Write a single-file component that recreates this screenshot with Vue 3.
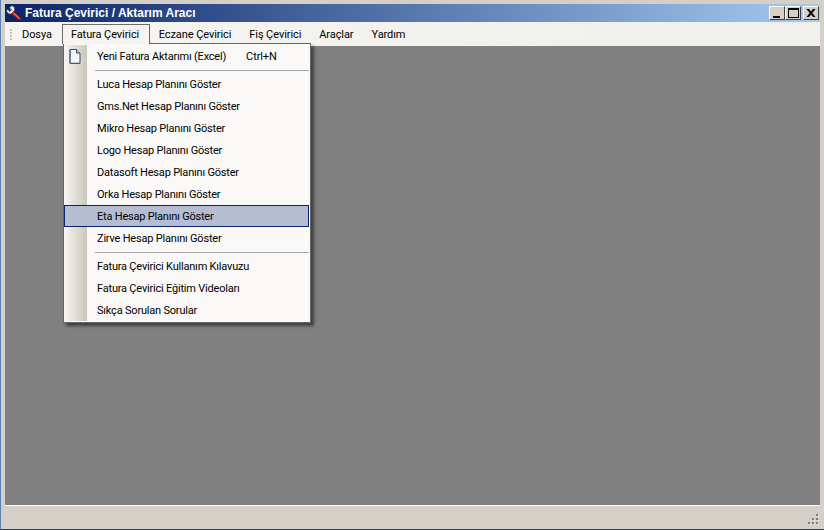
<script setup>
const topMenus = ['Dosya', 'Fatura Çevirici', 'Eczane Çevirici', 'Fiş Çevirici', 'Araçlar', 'Yardım']

const groups = [
  [{ label: 'Yeni Fatura Aktarımı (Excel)', shortcut: 'Ctrl+N', icon: true }],
  [
    { label: 'Luca Hesap Planını Göster' },
    { label: 'Gms.Net Hesap Planını Göster' },
    { label: 'Mikro Hesap Planını Göster' },
    { label: 'Logo Hesap Planını Göster' },
    { label: 'Datasoft Hesap Planını Göster' },
    { label: 'Orka Hesap Planını Göster' },
    { label: 'Eta Hesap Planını Göster', active: true },
    { label: 'Zirve Hesap Planını Göster' }
  ],
  [
    { label: 'Fatura Çevirici Kullanım Kılavuzu' },
    { label: 'Fatura Çevirici Eğitim Videoları' },
    { label: 'Sıkça Sorulan Sorular' }
  ]
]
</script>

<template>
  <div class="window">
    <div class="titlebar">
      <svg class="app-icon" width="16" height="16" viewBox="0 0 16 16">
        <path d="M5.5 0.8 L3.5 2.8 L5.4 5 L3.8 6.4 L1.7 4.4 L0.6 5.6 C0.8 8 2.8 9.4 5 9 L7.5 7.2 C9 5.5 9 3.2 7.8 1.6 C7.2 1 6.3 0.8 5.5 0.8 Z" fill="#e4e4ea" stroke="#4a4a52" stroke-width="0.7" />
        <path d="M5.6 8.6 L7.8 6.6 L14.6 13 C15.3 14 14.2 15.4 13 14.8 Z" fill="#e0301e" stroke="#7a1410" stroke-width="0.6" />
        <path d="M7.6 8 L13.4 13.6" stroke="#ff9a80" stroke-width="0.8" />
      </svg>
      <span class="title">Fatura Çevirici / Aktarım Aracı</span>
      <div class="caption-buttons">
        <button class="cap-btn">
          <span class="glyph-min"></span>
        </button>
        <button class="cap-btn max">
          <span class="glyph-max"></span>
        </button>
        <button class="cap-btn close">
          <svg width="10" height="8" viewBox="0 0 10 8">
            <path d="M0.5 0 L3 0 L5 2.6 L7 0 L9.5 0 L6.3 4 L9.5 8 L7 8 L5 5.4 L3 8 L0.5 8 L3.7 4 Z" fill="#000" />
          </svg>
        </button>
      </div>
    </div>

    <div class="menubar">
      <div class="grip">
        <i></i><i></i><i></i><i></i>
      </div>
      <div
        v-for="(m, i) in topMenus"
        :key="m"
        class="top-item"
        :class="{ open: i === 1 }"
      >{{ m }}</div>
    </div>

    <div class="client">
      <div class="dropdown">
        <template v-for="(group, g) in groups" :key="g">
          <div v-if="g > 0" class="sep-row">
            <div class="gutter"></div>
            <div class="sep"></div>
          </div>
          <div
            v-for="item in group"
            :key="item.label"
            class="item"
            :class="{ active: item.active }"
          >
            <div class="gutter">
              <svg v-if="item.icon" class="doc" width="12" height="15" viewBox="0 0 12 15">
                <path d="M1 0.5 H7.5 L11 4 V14.5 H1 Z" fill="#f4f7fc" stroke="#2f4a78" />
                <path d="M7.5 0.5 V4 H11" fill="#c4d2e6" stroke="#2f4a78" />
                <path d="M1 14.2 H11 M1 1 V14" stroke="#4c6690" stroke-width="1" />
              </svg>
            </div>
            <span class="label">{{ item.label }}</span>
            <span v-if="item.shortcut" class="shortcut">{{ item.shortcut }}</span>
          </div>
        </template>
      </div>
    </div>

    <div class="statusbar">
      <svg class="resize" width="12" height="12" viewBox="0 0 12 12">
        <g fill="#808080">
          <rect x="8" y="0" width="2" height="2" />
          <rect x="4" y="4" width="2" height="2" />
          <rect x="8" y="4" width="2" height="2" />
          <rect x="0" y="8" width="2" height="2" />
          <rect x="4" y="8" width="2" height="2" />
          <rect x="8" y="8" width="2" height="2" />
        </g>
        <g fill="#fff">
          <rect x="10" y="2" width="1" height="1" />
          <rect x="6" y="6" width="1" height="1" />
          <rect x="10" y="6" width="1" height="1" />
          <rect x="2" y="10" width="1" height="1" />
          <rect x="6" y="10" width="1" height="1" />
          <rect x="10" y="10" width="1" height="1" />
        </g>
      </svg>
    </div>
  </div>
</template>

<style>
html, body {
  margin: 0;
  padding: 0;
  overflow: hidden;
}
</style>

<style scoped>
.window {
  width: 824px;
  height: 530px;
  box-sizing: border-box;
  padding: 4px 4px 1px 4px;
  background: #d4d0c8;
  display: flex;
  flex-direction: column;
  font-family: Roboto, "Liberation Sans", sans-serif;
  font-size: 11px;
  color: #000;
  border-bottom: 1px solid #404040;
  border-left: 1px solid #5a7fb8;
}

.titlebar {
  height: 18px;
  flex: none;
  display: flex;
  align-items: center;
  padding: 0 2px 0 1px;
  background: linear-gradient(to right, #0a246a, #a6caf0);
}

.app-icon {
  flex: none;
  margin-right: 3px;
}

.title {
  color: #fff;
  font-weight: bold;
  font-size: 12px;
  font-family: "Liberation Sans", sans-serif;
}

.caption-buttons {
  margin-left: auto;
  display: flex;
  margin-right: -1px;
}

.cap-btn {
  width: 16px;
  height: 14px;
  padding: 0;
  background: #d4d0c8;
  border: 1px solid;
  border-color: #fff #404040 #404040 #fff;
  display: flex;
  align-items: center;
  justify-content: center;
}

.cap-btn.close {
  margin-left: 2px;
}

.glyph-min {
  width: 7px;
  height: 2px;
  background: #000;
  margin-top: 8px;
  margin-right: 1px;
}

.glyph-max {
  width: 11px;
  height: 10px;
  box-sizing: border-box;
  border: 1px solid #000;
  border-top-width: 2px;
}

.menubar {
  height: 24px;
  flex: none;
  display: flex;
  align-items: flex-start;
  background: linear-gradient(to right, #f6f5f2, #f1efeb);
  padding-left: 5px;
}

.grip {
  width: 3px;
  height: 24px;
  display: flex;
  flex-direction: column;
  justify-content: center;
  gap: 1px;
}

.grip i {
  width: 2px;
  height: 2px;
  background: #c8c5bc;
}

.top-item {
  height: 20px;
  display: flex;
  align-items: center;
  padding: 0 8px 1px;
  margin-top: 2px;
  box-sizing: border-box;
  border: 1px solid transparent;
  border-bottom: none;
  letter-spacing: -0.08px;
}

.top-item:nth-child(2) {
  margin-right: 1px;
}

.top-item.open {
  background: #f5f4f1;
  border-color: #6b6b6b;
  position: relative;
  z-index: 3;
  padding-right: 9.5px;
}

.client {
  flex: 1;
  background: #808080;
  position: relative;
  border-bottom: 1px solid #fff;
}

.dropdown {
  position: absolute;
  left: 58px;
  top: -3px;
  width: 248px;
  box-sizing: border-box;
  padding: 1px 0;
  background: #faf9f7;
  border: 1px solid #666;
  box-shadow: 3px 3px 3px rgba(0, 0, 0, 0.5);
  z-index: 2;
}

.item {
  height: 22px;
  display: flex;
  align-items: center;
  box-sizing: border-box;
}

.gutter {
  width: 23px;
  flex: none;
  align-self: stretch;
  background: linear-gradient(to right, #f7f6f3, #c9c6bd);
  display: flex;
  align-items: center;
  justify-content: center;
}

.doc {
  margin-right: 2px;
}

.label {
  margin-left: 10px;
  white-space: nowrap;
  letter-spacing: -0.2px;
}

.shortcut {
  margin-left: 20px;
  white-space: nowrap;
  letter-spacing: -0.1px;
}

.item.active {
  background: #b6bdd2;
  outline: 1px solid #0a246a;
  outline-offset: -1px;
  margin-right: 1px;
}

.item.active .gutter {
  background: transparent;
}

.sep-row {
  height: 6px;
  display: flex;
  align-items: center;
}

.sep-row .gutter {
  height: 6px;
}

.sep {
  flex: 1;
  height: 1px;
  background: #a6a6a6;
  margin-left: 8px;
  margin-right: 1px;
}

.statusbar {
  height: 22px;
  flex: none;
  background: #d4d0c8;
  display: flex;
  justify-content: flex-end;
  align-items: flex-end;
  padding: 0 0 2px 0;
  box-sizing: border-box;
}

.resize {
  display: block;
}
</style>
